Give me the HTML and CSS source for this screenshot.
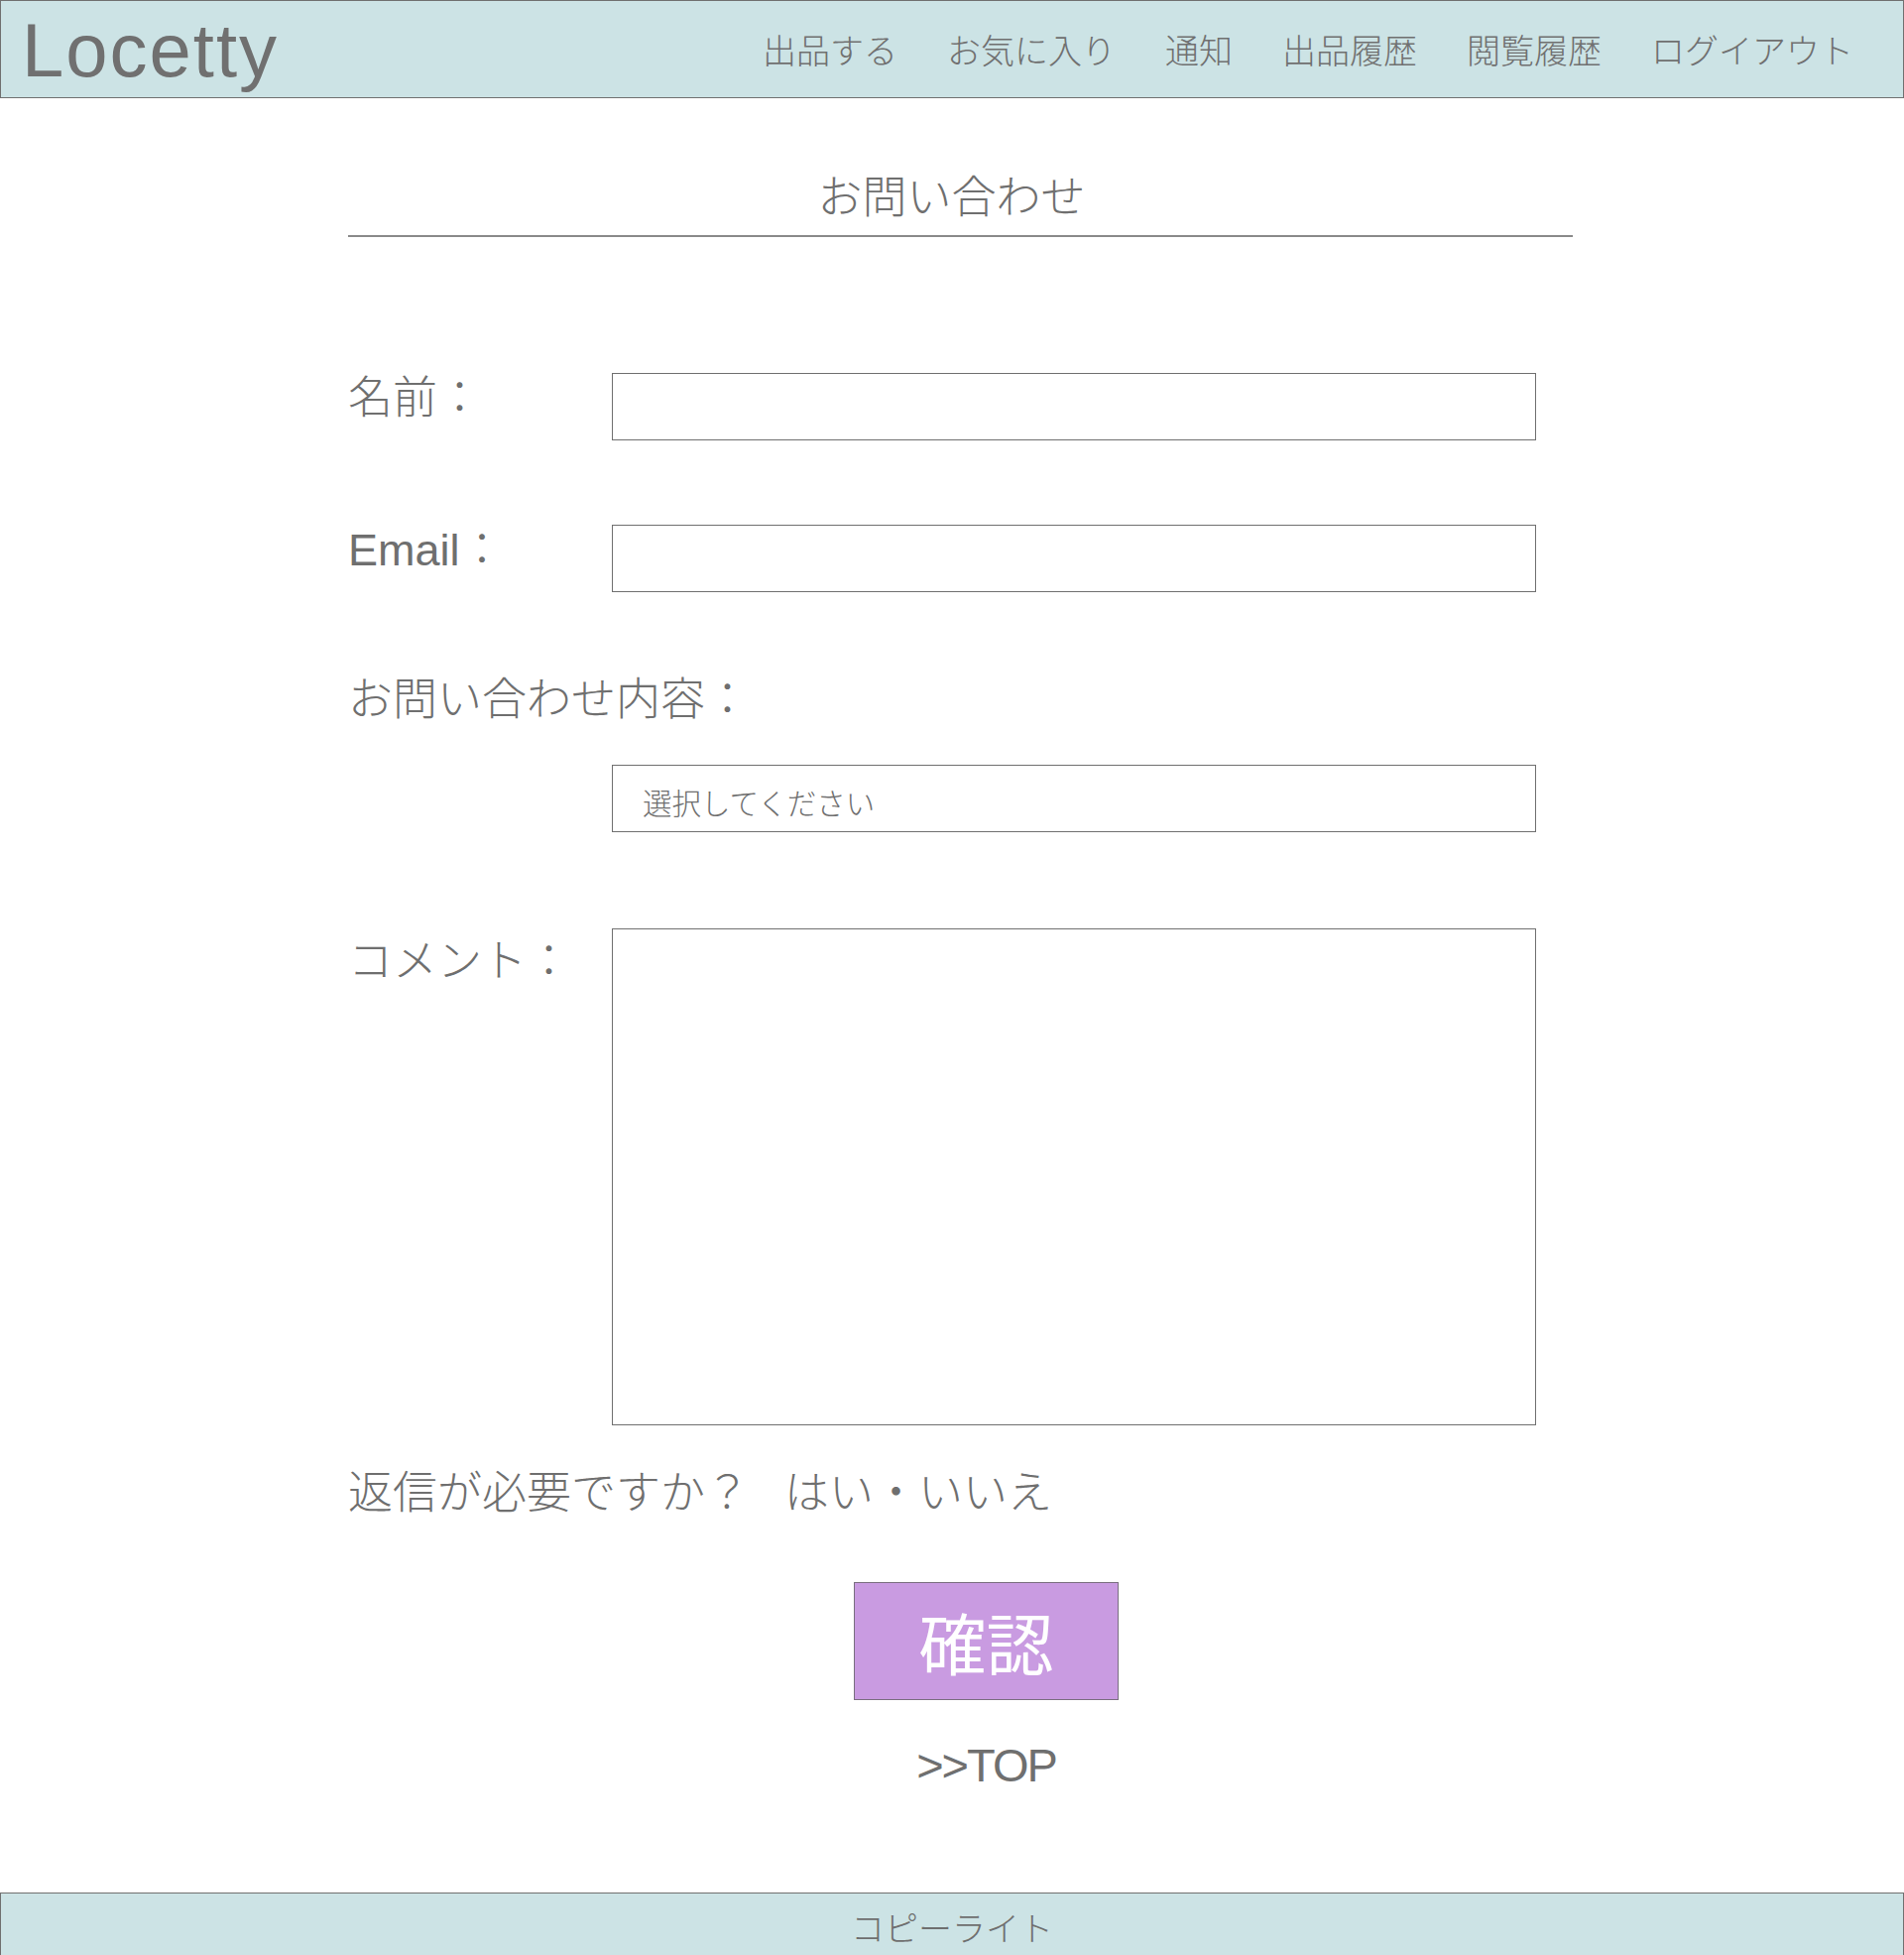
FILE: index.html
```html
<!DOCTYPE html>
<html lang="ja">
<head>
<meta charset="utf-8">
<title>お問い合わせ | Locetty</title>
<link rel="stylesheet" href="styles.css">
</head>
<body>
<header class="site-header">
  <div class="logo">Locetty</div>
  <nav class="nav">
    <a class="nav-link" href="#">出品する</a>
    <a class="nav-link" href="#">お気に入り</a>
    <a class="nav-link" href="#">通知</a>
    <a class="nav-link" href="#">出品履歴</a>
    <a class="nav-link" href="#">閲覧履歴</a>
    <a class="nav-link" href="#">ログイアウト</a>
  </nav>
</header>
<main class="main">
  <h1 class="page-title">お問い合わせ</h1>
  <form class="form">
    <div class="row row-name">
      <label class="label">名前：</label>
      <input class="field" type="text">
    </div>
    <div class="row row-email">
      <label class="label"><span class="latin">Email</span>：</label>
      <input class="field" type="text">
    </div>
    <div class="label label-block">お問い合わせ内容：</div>
    <div class="row row-select">
      <span></span>
      <div class="field select">選択してください</div>
    </div>
    <div class="row row-comment">
      <label class="label label-comment">コメント：</label>
      <textarea class="field textarea"></textarea>
    </div>
    <p class="reply">返信が必要ですか？<span class="reply-options">はい・いいえ</span></p>
    <div class="actions">
      <button class="confirm" type="button">確認</button>
      <a class="top-link" href="#">&gt;&gt;TOP</a>
    </div>
  </form>
</main>
<footer class="site-footer">コピーライト</footer>
</body>
</html>
```

FILE: styles.css
```css
* { box-sizing: border-box; }

html, body { margin: 0; padding: 0; }

body {
  font-family: "Noto Sans CJK JP", "Liberation Sans", sans-serif;
  font-weight: 300;
  color: #6f6f6f;
  background: #ffffff;
  min-height: 100vh;
  display: flex;
  flex-direction: column;
  overflow-x: hidden;
}

.site-header {
  height: 99px;
  background: #cce3e5;
  border: 1px solid #707070;
  display: flex;
  align-items: center;
  justify-content: space-between;
  padding: 0 50px 0 21px;
}

.logo {
  font-family: "Liberation Sans", Arial, sans-serif;
  font-weight: 400;
  font-size: 76px;
  line-height: 76px;
  letter-spacing: 2px;
  color: #707070;
  margin-top: 2px;
}

.nav {
  display: flex;
  gap: 50px;
}

.nav-link {
  font-size: 34px;
  line-height: 34px;
  color: #707070;
  text-decoration: none;
}

.main {
  flex: 1;
  width: 1235px;
  margin-left: 351px;
}

.page-title {
  margin: 75px 0 0;
  padding: 0 18px 19px 0;
  font-size: 45px;
  line-height: 44px;
  font-weight: 300;
  text-align: center;
  border-bottom: 2px solid #8a8a8a;
}

.form { margin: 0; }

.row {
  display: grid;
  grid-template-columns: 266px 932px;
  align-items: start;
}

.row-name { margin-top: 137px; }
.row-email { margin-top: 85px; }
.row-select { margin-top: 47px; }
.row-comment { margin-top: 97px; }

.label {
  font-size: 45px;
  line-height: 44px;
  display: block;
}

.latin {
  font-family: "Liberation Sans", Arial, sans-serif;
  font-weight: 400;
  font-size: 45px;
  line-height: 40px;
}

.label-block { margin-top: 83px; }
.label-comment { margin-top: 8px; }

.field {
  display: block;
  width: 932px;
  height: 68px;
  border: 1px solid #707070;
  background: #ffffff;
  margin: 0;
  padding: 0;
  font-family: inherit;
}

.select {
  display: flex;
  align-items: center;
  padding: 6px 0 0 30px;
  font-size: 29.5px;
  line-height: 29px;
  color: #6f6f6f;
}

.textarea {
  height: 501px;
  resize: none;
}

.reply {
  margin: 43px 0 0;
  font-size: 45px;
  line-height: 44px;
}

.reply-options {
  margin-left: 35px;
}

.actions {
  margin: 71px 0 0 510px;
  width: 267px;
  display: flex;
  flex-direction: column;
  align-items: center;
}

.confirm {
  width: 267px;
  height: 119px;
  background: #c99be1;
  border: 1px solid #7a6f80;
  color: #ffffff;
  font-family: "Noto Sans CJK JP", sans-serif;
  font-weight: 400;
  font-size: 68px;
  line-height: 68px;
  padding: 0;
  margin: 0;
}

.top-link {
  margin-top: 42px;
  font-family: "Liberation Sans", Arial, sans-serif;
  font-weight: 400;
  font-size: 47px;
  line-height: 47px;
  letter-spacing: -2px;
  color: #6f6f6f;
  text-decoration: none;
}

.site-footer {
  margin-top: 105px;
  height: 63px;
  background: #cce3e5;
  border: 1px solid #707070;
  border-bottom: none;
  text-align: center;
  font-size: 34px;
  line-height: 33px;
  padding-top: 17px;
  color: #6f6f6f;
}
```
